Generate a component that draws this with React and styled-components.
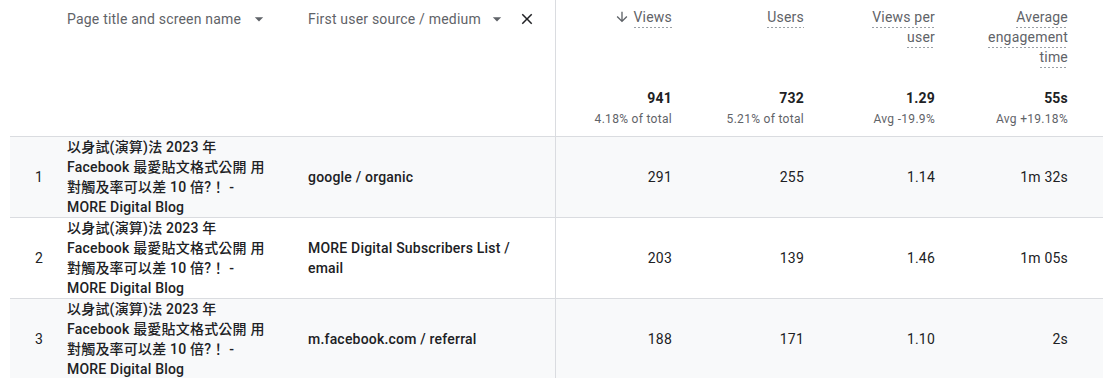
import React from 'react';
import styled, { createGlobalStyle } from 'styled-components';

// GA4 風格的報表表格: 表頭(維度 + 指標 + 總計) 與資料列

const GlobalStyle = createGlobalStyle`
  html, body {
    margin: 0;
    padding: 0;
    background: #ffffff;
    overflow: hidden;
  }
  body {
    font-family: Roboto, "Noto Sans CJK TC", "Liberation Sans", sans-serif;
    color: #202124;
    letter-spacing: 0.2px;
  }
`;

const COLS = '57px 241px 247px 133px 132px 131px 1fr';

const Page = styled.div`
  padding-left: 10px;
  width: 1093px;
`;

const HeaderRow = styled.div`
  display: grid;
  grid-template-columns: ${COLS};
  height: 137px;
  box-sizing: border-box;
  border-bottom: 1px solid #dadce0;
`;

const DimHead = styled.div`
  display: flex;
  align-items: flex-start;
  padding-top: 9px;
  font-size: 14px;
  line-height: 20px;
  color: #5f6368;
  white-space: nowrap;
`;

const IconBox = styled.span`
  display: inline-flex;
  align-items: center;
  justify-content: center;
  width: ${(p) => p.$size}px;
  height: 20px;
  margin-left: ${(p) => p.$gap}px;
  color: ${(p) => p.$color};
`;

const MetricHead = styled.div`
  display: flex;
  flex-direction: column;
  align-items: flex-end;
  padding: 7px ${(p) => p.$pad}px 9px 0;
  border-left: ${(p) => (p.$divider ? '1px solid #dadce0' : 'none')};
  text-align: right;
`;

const LabelRow = styled.div`
  display: flex;
  align-items: flex-start;
  gap: 4px;
`;

const Label = styled.div`
  max-width: 84px;
  font-size: 14px;
  line-height: 20px;
  color: #5f6368;
`;

const Dashed = styled.span`
  padding-bottom: 3px;
  background-image: linear-gradient(to right, #9aa0a6 50%, transparent 50%);
  background-size: 4px 1px;
  background-repeat: repeat-x;
  background-position: 0 100%;
  -webkit-box-decoration-break: clone;
  box-decoration-break: clone;
`;

const Totals = styled.div`
  margin-top: auto;
  display: flex;
  flex-direction: column;
  align-items: flex-end;
`;

const TotalValue = styled.div`
  font-size: 14px;
  line-height: 20px;
  font-weight: 700;
  color: #202124;
`;

const TotalNote = styled.div`
  margin-top: 3px;
  font-size: 12px;
  line-height: 16px;
  letter-spacing: 0.3px;
  color: #5f6368;
`;

const Row = styled.div`
  display: grid;
  grid-template-columns: ${COLS};
  height: 81px;
  box-sizing: border-box;
  border-bottom: 1px solid #dadce0;
  background: ${(p) => (p.$shaded ? '#f8f9fa' : '#ffffff')};
`;

const IndexCell = styled.div`
  display: flex;
  align-items: center;
  justify-content: center;
  padding: 0 0 2px 1px;
  font-size: 14px;
  line-height: 20px;
`;

const TextCell = styled.div`
  display: flex;
  align-items: center;
  padding-right: ${(p) => p.$pad}px;
  padding-bottom: 2px;
  font-size: 14px;
  line-height: 20px;
  font-weight: 500;
  color: #202124;
`;

const NumCell = styled.div`
  display: flex;
  align-items: center;
  justify-content: flex-end;
  padding-right: ${(p) => p.$pad}px;
  padding-bottom: 2px;
  border-left: ${(p) => (p.$divider ? '1px solid #dadce0' : 'none')};
  font-size: 14px;
  line-height: 20px;
  color: #202124;
`;

const DropArrow = () => (
  <svg width="20" height="20" viewBox="0 0 24 24" fill="currentColor">
    <path d="M7 10l5 5 5-5z" />
  </svg>
);

const CloseIcon = () => (
  <svg width="18" height="18" viewBox="0 0 24 24" fill="currentColor">
    <path d="M19 6.41L17.59 5 12 10.59 6.41 5 5 6.41 10.59 12 5 17.59 6.41 19 12 13.41 17.59 19 19 17.59 13.41 12z" />
  </svg>
);

const SortArrow = () => (
  <svg width="16" height="20" viewBox="0 0 24 24" fill="#5f6368">
    <path d="M20 12l-1.41-1.41L13 16.17V4h-2v12.17l-5.58-5.59L4 12l8 8 8-8z" />
  </svg>
);

const metrics = [
  { label: 'Views', total: '941', note: '4.18% of total', sorted: true },
  { label: 'Users', total: '732', note: '5.21% of total' },
  { label: 'Views per user', total: '1.29', note: 'Avg -19.9%' },
  { label: 'Average engagement time', total: '55s', note: 'Avg +19.18%' },
];

const TITLE = '以身試(演算)法 2023 年 Facebook 最愛貼文格式公開 用對觸及率可以差 10 倍?！ - MORE Digital Blog';

const rows = [
  { source: 'google / organic', values: ['291', '255', '1.14', '1m 32s'] },
  { source: 'MORE Digital Subscribers List / email', values: ['203', '139', '1.46', '1m 05s'] },
  { source: 'm.facebook.com / referral', values: ['188', '171', '1.10', '2s'] },
];

const padFor = (i) => (i === 3 ? 35 : 16);

const App = () => {
  return (
    <Page>
      <GlobalStyle />
      <HeaderRow>
        <div />
        <DimHead>
          Page title and screen name
          <IconBox $size={20} $gap={8} $color="#5f6368">
            <DropArrow />
          </IconBox>
        </DimHead>
        <DimHead>
          First user source / medium
          <IconBox $size={20} $gap={6} $color="#5f6368">
            <DropArrow />
          </IconBox>
          <IconBox $size={18} $gap={11} $color="#202124">
            <CloseIcon />
          </IconBox>
        </DimHead>
        {metrics.map((m, i) => (
          <MetricHead key={m.label} $divider={i === 0} $pad={padFor(i)}>
            <LabelRow>
              {m.sorted && <SortArrow />}
              <Label>
                <Dashed>{m.label}</Dashed>
              </Label>
            </LabelRow>
            <Totals>
              <TotalValue>{m.total}</TotalValue>
              <TotalNote>{m.note}</TotalNote>
            </Totals>
          </MetricHead>
        ))}
      </HeaderRow>
      {rows.map((r, idx) => (
        <Row key={r.source} $shaded={idx % 2 === 0}>
          <IndexCell>{idx + 1}</IndexCell>
          <TextCell $pad={36}>
            <div>{TITLE}</div>
          </TextCell>
          <TextCell $pad={20}>
            <div>{r.source}</div>
          </TextCell>
          {r.values.map((v, i) => (
            <NumCell key={i} $divider={i === 0} $pad={padFor(i)}>
              {v}
            </NumCell>
          ))}
        </Row>
      ))}
    </Page>
  );
};

export default App;
